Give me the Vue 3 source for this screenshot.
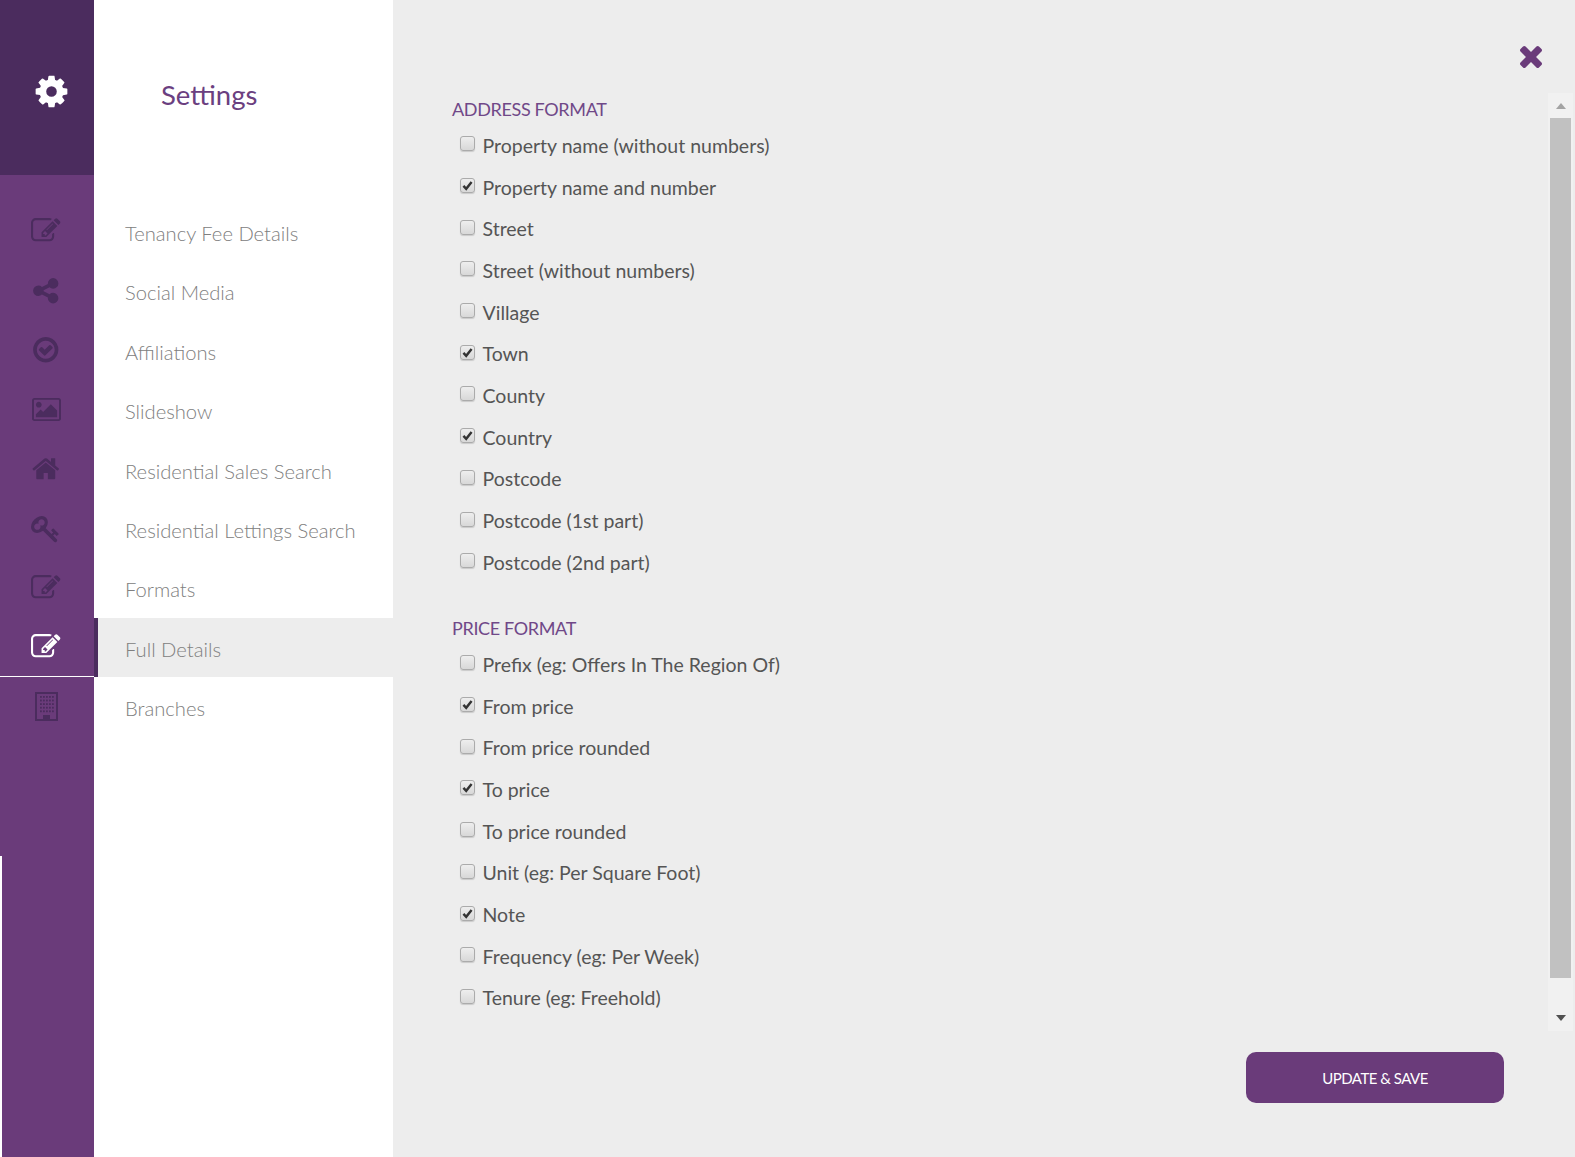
<script setup>
const edit = { vb: '0 0 1792 1792', cls: 'i-edit', d: 'M888 1184l116-116-152-152-116 116v56h96v96h56zm440-720q-16-16-33 1l-350 350q-17 17-1 33t33-1l350-350q17-17 1-33zm80 594v190q0 119-84.5 203.5t-203.5 84.5h-832q-119 0-203.5-84.5t-84.5-203.5v-832q0-119 84.5-203.5t203.5-84.5h832q63 0 117 25 15 7 18 23 3 17-9 29l-49 49q-14 14-32 8-23-6-45-6h-832q-66 0-113 47t-47 113v832q0 66 47 113t113 47h832q66 0 113-47t47-113v-126q0-13 9-22l64-64q15-15 35-7t20 29zm-96-738l288 288-672 672h-288v-288zm444 132l-92 92-288-288 92-92q28-28 68-28t68 28l152 152q28 28 28 68t-28 68z' }
const railIcons = [
  edit,
  { vb: '0 0 1792 1792', cls: 'i-std', d: 'M1344 1024q133 0 226.5 93.5t93.5 226.5-93.5 226.5-226.5 93.5-226.5-93.5-93.5-226.5q0-12 2-34l-360-180q-92 86-218 86-133 0-226.5-93.5t-93.5-226.5 93.5-226.5 226.5-93.5q126 0 218 86l360-180q-2-22-2-34 0-133 93.5-226.5t226.5-93.5 226.5 93.5 93.5 226.5-93.5 226.5-226.5 93.5q-126 0-218-86l-360 180q2 22 2 34t-2 34l360 180q92-86 218-86z' },
  { vb: '0 0 1792 1792', cls: 'i-std', d: 'M1299 813l-422 422q-19 19-45 19t-45-19l-294-294q-19-19-19-45t19-45l102-102q19-19 45-19t45 19l147 147 275-275q19-19 45-19t45 19l102 102q19 19 19 45t-19 45zm141 83q0-148-73-273t-198-198-273-73-273 73-198 198-73 273 73 273 198 198 273 73 273-73 198-198 73-273zm224 0q0 209-103 385.5t-279.5 279.5-385.5 103-385.5-103-279.5-279.5-103-385.5 103-385.5 279.5-279.5 385.5-103 385.5 103 279.5 279.5 103 385.5z' },
  { vb: '-64 0 1920 1792', cls: 'i-img', d: 'M576 576q0 80-56 136t-136 56-136-56-56-136 56-136 136-56 136 56 56 136zm1024 384v448h-1408v-192l320-320 160 160 512-512zm96-704h-1600q-13 0-22.5 9.5t-9.5 22.5v1216q0 13 9.5 22.5t22.5 9.5h1600q13 0 22.5-9.5t9.5-22.5v-1216q0-13-9.5-22.5t-22.5-9.5zm160 32v1216q0 66-47 113t-113 47h-1600q-66 0-113-47t-47-113v-1216q0-66 47-113t113-47h1600q66 0 113 47t47 113z' },
  { vb: '0 0 1792 1792', cls: 'i-std', d: 'M1472 992v480q0 26-19 45t-45 19h-384v-384h-256v384h-384q-26 0-45-19t-19-45v-480q0-1 .5-3t.5-3l575-474 575 474q1 2 1 6zm223-69l-62 74q-8 9-21 11h-3q-13 0-21-7l-692-577-692 577q-12 8-24 7-13-2-21-11l-62-74q-8-10-7-23.5t11-21.5l719-599q32-26 76-26t76 26l244 204v-195q0-14 9-23t23-9h192q14 0 23 9t9 23v408l219 182q10 8 11 21.5t-7 23.5z' },
  { vb: '0 0 1792 1792', cls: 'i-std', d: 'M832 512q0-80-56-136t-136-56-136 56-56 136q0 42 19 83-41-19-83-19-80 0-136 56t-56 136 56 136 136 56 136-56 56-136q0-42-19-83 41 19 83 19 80 0 136-56t56-136zm851 704q0 17-49 66t-66 49q-9 0-28.5-16t-36.5-33-38.5-40-24.5-26l-96 96 220 220q28 28 28 68 0 42-39 81t-81 39q-40 0-68-28l-671-671q-176 131-365 131-163 0-265.5-102.5t-102.5-265.5q0-160 95-313t248-248 313-95q163 0 265.5 102.5t102.5 265.5q0 189-131 365l355 355 96-96q-3-3-26-24.5t-40-38.5-33-36.5-16-28.5q0-17 49-66t66-49q13 0 23 10 6 6 46 44.5t82 79.5 86.5 86 73 78 28.5 41z' },
  edit,
  { ...edit, active: true },
]
const cogPath = 'M1152 896q0-106-75-181t-181-75-181 75-75 181 75 181 181 75 181-75 75-181zm512-109v222q0 12-8 23t-20 13l-185 28q-19 54-39 91 35 50 107 138 10 12 10 25t-9 23q-27 37-99 108t-94 71q-12 0-26-9l-138-108q-44 23-91 38-16 136-29 186-7 28-36 28h-222q-14 0-24.5-8.5t-11.5-21.5l-28-184q-49-16-90-37l-141 107q-10 9-25 9-14 0-25-11-126-114-165-168-7-10-7-23 0-12 8-23 15-21 51-66.5t54-70.5q-27-50-41-99l-183-27q-13-2-21-12.5t-8-23.5v-222q0-12 8-23t19-13l186-28q14-46 39-92-40-57-107-138-10-12-10-24 0-10 9-23 26-36 98.5-107.5t94.5-71.5q13 0 26 10l138 107q44-23 91-38 16-136 29-186 7-28 36-28h222q14 0 24.5 8.5t11.5 21.5l28 184q49 16 90 37l142-107q9-9 24-9 13 0 25 10 129 119 165 170 7 8 7 22 0 12-8 23-15 21-51 66.5t-54 70.5q26 50 41 98l183 28q13 2 21 12.5t8 23.5z'
const timesPath = 'M1490 1322q0 40-28 68l-136 136q-28 28-68 28t-68-28l-294-294-294 294q-28 28-68 28t-68-28l-136-136q-28-28-28-68t28-68l294-294-294-294q-28-28-28-68t28-68l136-136q28-28 68-28t68 28l294 294 294-294q28-28 68-28t68 28l136 136q28 28 28 68t-28 68l-294 294 294 294q28 28 28 68z'
const windows = []
for (let r = 0; r < 5; r++) for (let c = 0; c < 5; c++) windows.push({ x: 5 + c * 3, y: 4 + r * 3.6 })
const navItems = ['Tenancy Fee Details', 'Social Media', 'Affiliations', 'Slideshow', 'Residential Sales Search', 'Residential Lettings Search', 'Formats', 'Full Details', 'Branches']
const groups = [
  { title: 'ADDRESS FORMAT', items: [
    ['Property name (without numbers)', false], ['Property name and number', true], ['Street', false],
    ['Street (without numbers)', false], ['Village', false], ['Town', true], ['County', false],
    ['Country', true], ['Postcode', false], ['Postcode (1st part)', false], ['Postcode (2nd part)', false],
  ] },
  { title: 'PRICE FORMAT', items: [
    ['Prefix (eg: Offers In The Region Of)', false], ['From price', true], ['From price rounded', false],
    ['To price', true], ['To price rounded', false], ['Unit (eg: Per Square Foot)', false], ['Note', true],
    ['Frequency (eg: Per Week)', false], ['Tenure (eg: Freehold)', false],
  ] },
]
</script>

<template>
  <div class="page">
    <aside class="rail">
      <div class="rail-head">
        <svg class="cog" viewBox="0 0 1792 1792"><path :d="cogPath" /></svg>
      </div>
      <div class="rail-body">
        <div v-for="(icon, i) in railIcons" :key="i" class="rail-row" :class="{ active: icon.active }">
          <svg :class="icon.cls" :viewBox="icon.vb"><path :d="icon.d" /></svg>
        </div>
        <div class="rail-row">
          <svg class="i-bld" viewBox="0 0 23 29">
            <path fill-rule="evenodd" d="M0 0h23v29H0zM2 2v25h6v-4h7v4h6V2z" />
            <rect v-for="(w, i) in windows" :key="i" :x="w.x" :y="w.y" width="1.8" height="1.8" />
          </svg>
        </div>
      </div>
      <div class="rail-tail"></div>
    </aside>

    <nav class="side">
      <h1 class="side-title">Settings</h1>
      <a v-for="item in navItems" :key="item" class="side-item" :class="{ active: item === 'Full Details' }">{{ item }}</a>
    </nav>

    <main class="main">
      <div class="close-row">
        <svg class="close" viewBox="302 366 1188 1188"><path :d="timesPath" /></svg>
      </div>
      <div class="scroll">
        <div class="content">
          <section v-for="g in groups" :key="g.title" class="group">
            <h2 class="group-title">{{ g.title }}</h2>
            <label v-for="it in g.items" :key="it[0]" class="check-row">
              <span class="box">
                <svg v-if="it[1]" viewBox="0 0 14 14"><path d="M2.6 7.4 5.6 10.6 11.4 3.2" /></svg>
              </span>
              <span class="check-label">{{ it[0] }}</span>
            </label>
          </section>
        </div>
        <div class="bar">
          <span class="arrow up"></span>
          <div class="thumb"></div>
          <span class="arrow down"></span>
        </div>
      </div>
      <div class="foot">
        <button class="save">UPDATE &amp; SAVE</button>
      </div>
    </main>
  </div>
</template>

<style>
html, body { margin: 0; background: #fff; overflow: hidden; }
</style>

<style scoped>
.page {
  display: flex;
  width: 1575px;
  height: 1157px;
  overflow: hidden;
  font-family: Lato, "Noto Sans", sans-serif;
  background: #fff;
}
.rail {
  width: 94px;
  flex: none;
  display: flex;
  flex-direction: column;
}
.rail-head {
  height: 175px;
  background: #4b2c5e;
  display: flex;
  align-items: center;
  justify-content: center;
  padding: 7px 0 0 8px;
  box-sizing: border-box;
}
.cog { width: 37px; height: 37px; fill: #fff; }
.rail-body {
  height: 681px;
  box-sizing: border-box;
  padding-top: 27px;
  background: #6a3b7a;
}
.rail-row {
  height: 59.43px;
  box-sizing: border-box;
  padding: 0 2px 1px 0;
  display: flex;
  align-items: center;
  justify-content: center;
  fill: #4b2c5e;
}
.rail-row.active { fill: #fff; border-bottom: 1px solid #fff; padding-bottom: 0; }
.rail-tail {
  flex: 1;
  margin-left: 2px;
  background: #6a3b7a;
}
.i-edit { width: 29.5px; height: 29.5px; }
.i-std { width: 29.5px; height: 29.5px; }
.i-img { width: 29px; height: 27px; margin-top: 1px; }
.i-bld { width: 23px; height: 29px; }

.side {
  width: 299px;
  flex: none;
  display: flex;
  flex-direction: column;
  background: #fff;
}
.side-title {
  height: 202px;
  box-sizing: border-box;
  margin: 0;
  padding: 76px 0 0 67px;
  font-size: 27.5px;
  line-height: 38px;
  font-weight: 400;
  color: #6b3f80;
}
.side-item {
  height: 59.43px;
  box-sizing: border-box;
  display: flex;
  align-items: center;
  padding: 2.5px 0 0 31px;
  font-size: 20.2px;
  font-weight: 300;
  color: #808080;
}
.side-item.active {
  background: #ededed;
  border-left: 4px solid #4b2c5e;
  padding-left: 27px;
}

.main {
  flex: 1;
  display: flex;
  flex-direction: column;
  background: #ededed;
  padding-top: 46px;
  box-sizing: border-box;
}
.close-row {
  height: 47px;
  flex: none;
  display: flex;
  justify-content: flex-end;
  align-items: flex-start;
  padding-right: 33px;
}
.close { width: 22px; height: 22px; fill: #6a3b7a; }
.scroll {
  height: 938px;
  flex: none;
  display: flex;
}
.content {
  flex: 1;
  padding: 4.5px 0 0 59px;
}
.group { margin-bottom: 33.5px; }
.group-title {
  margin: 0;
  height: 27px;
  font-size: 18px;
  line-height: 22px;
  font-weight: 400;
  letter-spacing: -0.35px;
  color: #704888;
}
.check-row {
  height: 41.7px;
  display: flex;
  align-items: center;
  padding-left: 8px;
}
.box {
  width: 15px;
  height: 15px;
  flex: none;
  box-sizing: border-box;
  margin: -3px 7.5px 0 0;
  border: 1px solid #ababab;
  border-radius: 3px;
  background: linear-gradient(#eee, #d8d8d8);
  box-shadow: 0 1px 1px rgba(0, 0, 0, 0.15);
  display: flex;
}
.box svg {
  width: 13px;
  height: 13px;
  fill: none;
  stroke: #333;
  stroke-width: 2.6;
}
.check-label {
  font-size: 19.5px;
  color: #555;
}
.bar {
  width: 25px;
  flex: none;
  margin-right: 2px;
  background: #f1f1f1;
  display: flex;
  flex-direction: column;
  align-items: center;
  padding-top: 10px;
  box-sizing: border-box;
}
.arrow {
  width: 0;
  height: 0;
  border-left: 5.5px solid transparent;
  border-right: 5.5px solid transparent;
}
.arrow.up { border-bottom: 6px solid #a3a3a3; }
.arrow.down { border-top: 6px solid #505050; }
.thumb {
  width: 21px;
  height: 860px;
  margin: 9px 0 37px;
  background: #c1c1c1;
}
.foot {
  display: flex;
  justify-content: flex-end;
  padding: 21px 71px 0 0;
}
.save {
  width: 258px;
  height: 51px;
  border: 0;
  border-radius: 10px;
  background: #6a3b7a;
  color: #fff;
  font-family: inherit;
  font-size: 15px;
  font-weight: 400;
  letter-spacing: -0.5px;
  padding: 0;
}
</style>
